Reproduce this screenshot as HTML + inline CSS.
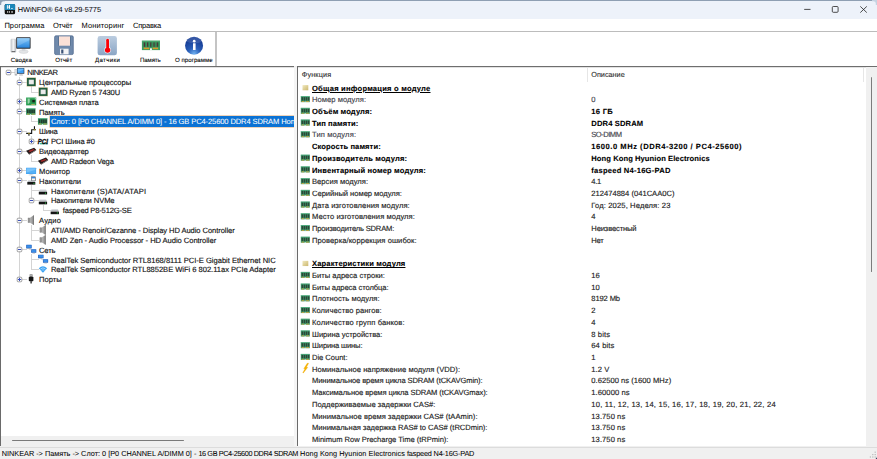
<!DOCTYPE html>
<html lang="ru"><head><meta charset="utf-8"><title>HWiNFO 64</title>
<style>
html,body{margin:0;padding:0}
body{width:877px;height:459px;overflow:hidden;position:relative;background:#f0f0f0;font-family:"Liberation Sans", sans-serif;color:#000}
div,span,svg{position:absolute;box-sizing:border-box}
.t{white-space:nowrap;line-height:1;text-rendering:geometricPrecision;-webkit-text-stroke:.14px}
#title{left:0;top:0;width:877px;height:18.7px;background:#edf2fa}
#menu{left:0;top:18.7px;width:877px;height:12px;background:#fff}
#tb{left:0;top:31.6px;width:877px;height:34.5px;background:#fff}
#tree{left:1px;top:67px;width:293px;height:369px;background:#fff;overflow:hidden}
#list{left:298px;top:67px;width:568px;height:378.6px;background:#fff;overflow:hidden}
.tr{font-size:7.60px;color:#111}
.lr{font-size:7.60px;color:#222}
.b{font-weight:bold;color:#000;-webkit-text-stroke:.1px}
.u{text-decoration:underline;text-decoration-thickness:.55px;text-underline-offset:.9px}
.g{color:#42424a}
.tl{font-size:6.1px;color:#000;-webkit-text-stroke:.08px}

</style></head><body>
<svg width="0" height="0" style="left:0;top:0"><defs><linearGradient id="ag" x1="0" y1="0" x2="1" y2="0"><stop offset="0" stop-color="#cfcfcf"/><stop offset="1" stop-color="#8c8c8c"/></linearGradient><linearGradient id="fg" x1="0" y1="0" x2="1" y2="1"><stop offset="0" stop-color="#f1e9bf"/><stop offset="1" stop-color="#cbb76e"/></linearGradient></defs></svg>
<div id="title">
<div style="left:0;top:0;width:877px;height:1.2px;background:#8e9fb3"></div>
<svg style="left:0;top:0" width="5" height="5" viewBox="0 0 5 5"><path d="M0 0H5V1.2H3.6A2.4 2.4 0 0 0 1.2 3.6V5H0Z" fill="#8e9fb3"/></svg>
<svg style="left:872px;top:0" width="5" height="5" viewBox="0 0 5 5"><path d="M5 0H0V1.2H1.4A2.4 2.4 0 0 1 3.8 3.6V5H5Z" fill="#c5d3e2"/></svg>
<svg style="left:4px;top:4px" width="12" height="11" viewBox="-.7 -.1 12 11"><rect x="0" y="0" width="10.4" height="10.2" rx="1.5" fill="#101010"/><path d="M1.5 0H8.9A1.5 1.5 0 0 1 10.4 1.5V5.9H0V1.5A1.5 1.5 0 0 1 1.5 0Z" fill="#1b86b9"/><rect x="2.2" y="1" width=".9" height="3.7" fill="#fff"/><rect x="4.1" y="1" width="1.2" height="3.7" fill="#fff"/><rect x="3" y="2.6" width="1.2" height=".8" fill="#fff"/><rect x="6.5" y="3.9" width="1.5" height=".8" fill="#fff"/><rect x="2.4" y="7.1" width=".8" height="1.5" fill="#fff"/><rect x="4.1" y="7.1" width="1" height="1.5" fill="#fff"/><rect x="6.7" y="7.1" width="1.3" height="1.5" fill="#fff"/></svg>
<span id="ttl" class="t" style="left:17.80px;top:5.80px;letter-spacing:-0.056px;font-size:7.4px;color:#000;-webkit-text-stroke:0">HWiNFO® 64 v8.29-5775</span>
<svg style="left:800px;top:3px" width="72" height="13" viewBox="0 0 72 13"><path d="M4.2 6.4H10.5" stroke="#222" stroke-width=".8" fill="none"/><rect x="32.3" y="3.5" width="5.8" height="5.8" rx="1" fill="none" stroke="#222" stroke-width=".8"/><path d="M60.3 3.4L66.8 9.6M66.8 3.4L60.3 9.6" stroke="#222" stroke-width=".8" fill="none"/></svg>
</div>
<div id="menu">
<span id="m0" class="t" style="left:4.40px;top:3.20px;letter-spacing:0.088px;font-size:7.5px;color:#000;-webkit-text-stroke:0">Программа</span>
<span id="m1" class="t" style="left:53.00px;top:3.20px;letter-spacing:-0.249px;font-size:7.5px;color:#000;-webkit-text-stroke:0">Отчёт</span>
<span id="m2" class="t" style="left:81.60px;top:3.20px;letter-spacing:0.110px;font-size:7.5px;color:#000;-webkit-text-stroke:0">Мониторинг</span>
<span id="m3" class="t" style="left:133.00px;top:3.20px;letter-spacing:-0.220px;font-size:7.5px;color:#000;-webkit-text-stroke:0">Справка</span>
</div>
<div style="left:0;top:30.6px;width:877px;height:1px;background:#bcbcbc"></div>
<div style="left:0;top:31.6px;width:877px;height:1px;background:#ececec"></div>
<div id="tb">
<div style="left:215.2px;top:0;width:1.5px;height:34.5px;background:#c4c4c4"></div>
</div>
<span id="tb0" class="t tl" style="left:10.80px;top:57.60px;letter-spacing:0.104px">Сводка</span>
<span id="tb1" class="t tl" style="left:55.30px;top:57.60px;letter-spacing:0.027px">Отчёт</span>
<span id="tb2" class="t tl" style="left:95.00px;top:57.60px;letter-spacing:0.345px">Датчики</span>
<span id="tb3" class="t tl" style="left:140.00px;top:57.60px;letter-spacing:-0.107px">Память</span>
<span id="tb4" class="t tl" style="left:175.00px;top:57.60px;letter-spacing:0.032px">О программе</span>
<svg style="left:0;top:32px" width="220" height="26" viewBox="0 32 220 26">
<defs>
<linearGradient id="scr" x1="0" y1="0" x2="0" y2="1"><stop offset="0" stop-color="#7cc4fa"/><stop offset="1" stop-color="#2a86dc"/></linearGradient>
<linearGradient id="twr" x1="0" y1="0" x2="1" y2="0"><stop offset="0" stop-color="#c8ccd0"/><stop offset=".5" stop-color="#f4f5f6"/><stop offset="1" stop-color="#b8bcc2"/></linearGradient>
<linearGradient id="thm" x1="0" y1="0" x2="0" y2="1"><stop offset="0" stop-color="#bccde0"/><stop offset="1" stop-color="#8aa5c5"/></linearGradient>
<radialGradient id="inf" cx=".5" cy=".95" r=".75"><stop offset="0" stop-color="#6fb0f0"/><stop offset=".45" stop-color="#2a5fb8"/><stop offset="1" stop-color="#173f98"/></radialGradient>
</defs>
<!-- computer -->
<rect x="10.9" y="39.2" width="5" height="13" rx=".6" fill="url(#twr)" stroke="#b4b8be" stroke-width=".4"/>
<rect x="11.6" y="51.2" width="3.6" height=".9" fill="#555"/>
<ellipse cx="23.6" cy="51.6" rx="4.6" ry="1.9" fill="#e2e4e6" stroke="#c4c7cb" stroke-width=".4"/>
<rect x="21.8" y="48.6" width="3.6" height="2.4" fill="#d4d7da"/>
<rect x="16.2" y="37.2" width="14.4" height="11.6" rx=".8" fill="#2b2f36"/>
<rect x="17.1" y="38.1" width="12.6" height="9.6" fill="url(#scr)"/>
<path d="M17.1 38.1H29.7V40L17.1 46.5Z" fill="#fff" opacity=".18"/>
<!-- floppy -->
<rect x="54.6" y="35.8" width="18.7" height="18.8" rx="1.4" fill="#6f89ab" stroke="#4d678c" stroke-width=".7"/>
<rect x="59" y="36.4" width="11" height="9.3" fill="#fbe1d7"/>
<rect x="58.2" y="36.4" width=".8" height="9.3" fill="#56708f"/><rect x="70" y="36.4" width=".8" height="9.3" fill="#56708f"/>
<rect x="60" y="48.7" width="8.6" height="5.6" fill="#f2f3f5"/>
<rect x="61.2" y="49.5" width="2.2" height="4" fill="#3d5478"/>
<!-- thermometer -->
<rect x="97.6" y="36" width="19.3" height="19.3" rx="2.4" fill="url(#thm)"/>
<rect x="105.6" y="38.2" width="4" height="11" rx="2" fill="#e8f0f8"/>
<circle cx="107.6" cy="50.1" r="3.3" fill="#e8f0f8"/>
<rect x="106.2" y="38.8" width="2.8" height="10" rx="1.4" fill="#fb0007"/>
<circle cx="107.6" cy="50.1" r="2.7" fill="#fb0007"/>
<!-- ram -->
<rect x="141.9" y="40.7" width="18.1" height="9.4" fill="#3b9c62"/>
<rect x="141.9" y="40.7" width="18.1" height=".7" fill="#5ab27c"/>
<g fill="#4a3638"><rect x="143.7" y="42.4" width="1.3" height="4.4"/><rect x="146.9" y="42.4" width="1.3" height="4.4"/><rect x="150.15" y="42.4" width="1.3" height="4.4"/><rect x="153.4" y="42.4" width="1.3" height="4.4"/><rect x="156.65" y="42.4" width="1.3" height="4.4"/></g>
<g fill="#2f7a4c" opacity=".7"><rect x="145" y="42.4" width="1" height="4.4"/><rect x="148.2" y="42.4" width="1" height="4.4"/><rect x="151.45" y="42.4" width="1" height="4.4"/><rect x="154.7" y="42.4" width="1" height="4.4"/><rect x="157.95" y="42.4" width="1" height="4.4"/></g>
<rect x="143.7" y="47.6" width="5.6" height="1.6" fill="#d89a2a"/><rect x="152.6" y="47.6" width="5.5" height="1.6" fill="#d89a2a"/>
<rect x="150" y="48.3" width="1.9" height="1.9" fill="#fff"/>
<!-- info -->
<circle cx="194.05" cy="45.7" r="9" fill="url(#inf)"/>
<path d="M186.2 41.5A9 9 0 0 1 202 41.8Q194 45 186.2 41.5Z" fill="#fff" opacity=".13"/>
<circle cx="194.2" cy="41.2" r="1.35" fill="#fff"/>
<rect x="193" y="43.2" width="2.6" height="6.9" rx=".3" fill="#fff"/>
</svg>
<div style="left:0;top:66px;width:294px;height:1px;background:#6e6e6e"></div>
<div style="left:297px;top:66px;width:580px;height:1px;background:#6e6e6e"></div>
<div style="left:0;top:66px;width:1px;height:379.6px;background:#6a6a6a"></div>
<div style="left:297.2px;top:66px;width:1.1px;height:379.6px;background:#6a6a6a;z-index:3"></div>
<div style="left:294px;top:67px;width:3px;height:379px;background:#f5f5f5"></div>
<div style="left:1px;top:67px;width:293px;height:1px;background:#e2e2e2;z-index:2"></div>
<div style="left:298px;top:67px;width:568px;height:1px;background:#e2e2e2;z-index:2"></div>
<div id="tree">
<div style="left:18.00px;top:9.51px;width:1px;height:203.49px;background:#d4d4d4"></div>
<div style="left:30.00px;top:19.38px;width:1px;height:6.62px;background:#d4d4d4"></div>
<div style="left:30.00px;top:48.98px;width:1px;height:6.02px;background:#d4d4d4"></div>
<div style="left:30.00px;top:68.72px;width:1px;height:6.28px;background:#d4d4d4"></div>
<div style="left:30.00px;top:88.45px;width:1px;height:6.55px;background:#d4d4d4"></div>
<div style="left:30.00px;top:118.05px;width:1px;height:15.95px;background:#d4d4d4"></div>
<div style="left:42.00px;top:137.78px;width:1px;height:6.22px;background:#d4d4d4"></div>
<div style="left:30.00px;top:157.52px;width:1px;height:16.48px;background:#d4d4d4"></div>
<div style="left:30.00px;top:187.12px;width:1px;height:15.88px;background:#d4d4d4"></div>
<div style="left:7.00px;top:5.00px;width:7.80px;height:1px;background:#d4d4d4"></div>
<svg style="left:4px;top:2px" width="7" height="7" viewBox="0 0 7 7"><rect x="1.2" y="1.2" width="4.6" height="4.6" rx=".9" fill="#fcfcfe" stroke="#7c7c7c" stroke-width=".7"/><path d="M2 3.5H5" stroke="#3a50bc" stroke-width="1"/></svg>
<svg style="left:13px;top:-1px" width="13" height="13" viewBox="-0.20 -1.38 13 13"><rect x=".7" y="1.9" width="2.1" height="6.2" fill="#dfe2e6" stroke="#a9aeb5" stroke-width=".35"/><rect x="1.1" y="7.1" width="1.3" height=".6" fill="#666"/><ellipse cx="6.9" cy="7.5" rx="2.1" ry=".7" fill="#d4d7db" stroke="#b0b4b9" stroke-width=".3"/><rect x="6" y="6.3" width="1.8" height="1" fill="#c5c9ce"/><rect x="2.8" y=".5" width="7.3" height="5.9" rx=".4" fill="#2c3440"/><rect x="3.4" y="1.1" width="6.1" height="4.7" fill="#3d9df2"/><path d="M3.4 1.1H9.5V2.2L3.4 5Z" fill="#8fd0ff" opacity=".55"/></svg>
<span id="t0" class="t tr" style="left:26.20px;top:2.13px;letter-spacing:-0.511px">NINKEAR</span>
<div style="left:18.00px;top:15.00px;width:7.80px;height:1px;background:#d4d4d4"></div>
<svg style="left:15px;top:12px" width="7" height="7" viewBox="0 0 7 7"><rect x="1.2" y="1.2" width="4.6" height="4.6" rx=".9" fill="#fcfcfe" stroke="#7c7c7c" stroke-width=".7"/><path d="M2 3.5H5" stroke="#3a50bc" stroke-width="1"/></svg>
<svg style="left:25px;top:9px" width="13" height="13" viewBox="-0.05 -1.25 13 13"><rect x=".55" y=".25" width="9.4" height="9" fill="#cdbb8e"/><rect x="1" y=".7" width="8.5" height="8.1" fill="#1e5b3c"/><rect x="2.7" y="2.4" width="5.1" height="4.7" fill="#dcdcdc"/><rect x="3.3" y="3" width="3.9" height="3.5" fill="#ececec"/></svg>
<span id="t1" class="t tr" style="left:38.05px;top:12.00px;letter-spacing:-0.039px">Центральные процессоры</span>
<div style="left:30.00px;top:25.00px;width:7.80px;height:1px;background:#d4d4d4"></div>
<svg style="left:36px;top:19px" width="13" height="13" viewBox="-0.90 -1.11 13 13"><rect x=".55" y=".25" width="9.4" height="9" fill="#cdbb8e"/><rect x="1" y=".7" width="8.5" height="8.1" fill="#1e5b3c"/><rect x="2.7" y="2.4" width="5.1" height="4.7" fill="#dcdcdc"/><rect x="3.3" y="3" width="3.9" height="3.5" fill="#ececec"/></svg>
<span id="t2" class="t tr" style="left:49.90px;top:21.86px;letter-spacing:-0.128px">AMD Ryzen 5 7430U</span>
<div style="left:18.00px;top:34.00px;width:7.80px;height:1px;background:#d4d4d4"></div>
<svg style="left:15px;top:31px" width="7" height="7" viewBox="0 0 7 7"><rect x="1.2" y="1.2" width="4.6" height="4.6" rx=".9" fill="#fcfcfe" stroke="#7c7c7c" stroke-width=".7"/><path d="M2 3.5H5M3.5 2V5" stroke="#3a50bc" stroke-width="1"/></svg>
<svg style="left:25px;top:28px" width="13" height="13" viewBox="-0.05 -1.98 13 13"><rect x=".05" y=".7" width="10.1" height="7.7" fill="#2a9d52"/><rect x=".05" y=".7" width="10.1" height=".6" fill="#55b878"/><rect x="1.7" y="1.6" width=".9" height="5" fill="#d8f0dc"/><rect x="3.3" y="1.6" width=".8" height="4.2" fill="#9fdcb0"/><rect x="4.6" y="2" width=".7" height="3.4" fill="#176b36"/><rect x="6.2" y="2.9" width="2.6" height="2.5" fill="#14261a"/><rect x="5.2" y="7" width="3.6" height=".8" fill="#c8b060"/><rect x="8.8" y="1.3" width=".9" height="1" fill="#e8f4ea"/></svg>
<span id="t3" class="t tr" style="left:38.05px;top:31.73px;letter-spacing:-0.105px">Системная плата</span>
<div style="left:18.00px;top:44.00px;width:7.80px;height:1px;background:#d4d4d4"></div>
<svg style="left:15px;top:41px" width="7" height="7" viewBox="0 0 7 7"><rect x="1.2" y="1.2" width="4.6" height="4.6" rx=".9" fill="#fcfcfe" stroke="#7c7c7c" stroke-width=".7"/><path d="M2 3.5H5" stroke="#3a50bc" stroke-width="1"/></svg>
<svg style="left:25px;top:38px" width="13" height="13" viewBox="-0.05 -1.85 13 13"><rect x=".05" y="1.65" width="9.4" height="6.3" fill="#2f9362"/><rect x=".05" y="1.65" width="9.4" height=".6" fill="#4fae7e"/><g fill="#22382c"><rect x=".9" y="2.7" width="1.6" height="3.6"/><rect x="3.1" y="2.7" width="1.6" height="3.6"/><rect x="5.2" y="2.7" width="1.6" height="3.6"/><rect x="7.3" y="2.7" width="1.6" height="3.6"/></g><rect x=".9" y="6.8" width="2.6" height=".9" fill="#c9a646"/><rect x="5.6" y="6.8" width="3.2" height=".9" fill="#c9a646"/><rect x="4.1" y="7.2" width=".9" height=".8" fill="#fff"/></svg>
<span id="t4" class="t tr" style="left:38.05px;top:41.60px;letter-spacing:-0.181px">Память</span>
<div style="left:30.00px;top:54.00px;width:7.80px;height:1px;background:#d4d4d4"></div>
<svg style="left:36px;top:48px" width="13" height="13" viewBox="-0.90 -1.72 13 13"><rect x=".05" y="1.65" width="9.4" height="6.3" fill="#2f9362"/><rect x=".05" y="1.65" width="9.4" height=".6" fill="#4fae7e"/><g fill="#22382c"><rect x=".9" y="2.7" width="1.6" height="3.6"/><rect x="3.1" y="2.7" width="1.6" height="3.6"/><rect x="5.2" y="2.7" width="1.6" height="3.6"/><rect x="7.3" y="2.7" width="1.6" height="3.6"/></g><rect x=".9" y="6.8" width="2.6" height=".9" fill="#c9a646"/><rect x="5.6" y="6.8" width="3.2" height=".9" fill="#c9a646"/><rect x="4.1" y="7.2" width=".9" height=".8" fill="#fff"/></svg>
<div style="left:48.75px;top:49.32px;width:300px;height:10.27px;background:#0b72d4;box-shadow:0 0 0 .6px #e3b68e"></div>
<span id="t5" class="t tr" style="left:49.90px;top:51.47px;letter-spacing:-0.137px;color:#fff;-webkit-text-stroke:.05px">Слот: 0 [P0 CHANNEL A/DIMM 0] - 16 GB PC4-25600 DDR4 SDRAM Hong Kong Hyunion Electronics faspeed N4-16G-PAD</span>
<div style="left:18.00px;top:64.00px;width:7.80px;height:1px;background:#d4d4d4"></div>
<svg style="left:15px;top:61px" width="7" height="7" viewBox="0 0 7 7"><rect x="1.2" y="1.2" width="4.6" height="4.6" rx=".9" fill="#fcfcfe" stroke="#7c7c7c" stroke-width=".7"/><path d="M2 3.5H5" stroke="#3a50bc" stroke-width="1"/></svg>
<svg style="left:25px;top:58px" width="13" height="13" viewBox="-0.05 -1.58 13 13"><path d="M.1 6.8H5.6V3.2H9.9M2.9 6.8V9.2M8.4 -.4V3.2" fill="none" stroke="#161616" stroke-width="1.1"/><rect x="2.3" y="6.2" width="1.2" height="1.2" fill="#b8a818"/><rect x="7.8" y="2.6" width="1.2" height="1.2" fill="#b8a818"/></svg>
<span id="t6" class="t tr" style="left:38.05px;top:61.33px;letter-spacing:-0.325px">Шина</span>
<div style="left:30.00px;top:74.00px;width:7.80px;height:1px;background:#d4d4d4"></div>
<svg style="left:27px;top:71px" width="7" height="7" viewBox="0 0 7 7"><rect x="1.2" y="1.2" width="4.6" height="4.6" rx=".9" fill="#fcfcfe" stroke="#7c7c7c" stroke-width=".7"/><path d="M2 3.5H5M3.5 2V5" stroke="#3a50bc" stroke-width="1"/></svg>
<svg style="left:36px;top:68px" width="13" height="13" viewBox="-0.90 -1.45 13 13"><rect x="2" y="6.4" width="8" height="1.5" fill="#3fb3a2"/><text x="-.1" y="7.8" font-family="Liberation Sans, sans-serif" font-weight="bold" font-style="italic" font-size="6.4" fill="#0c0c0c" stroke="#0c0c0c" stroke-width=".3" textLength="10" lengthAdjust="spacingAndGlyphs">PCI</text></svg>
<span id="t7" class="t tr" style="left:49.90px;top:71.20px;letter-spacing:-0.085px">PCI Шина #0</span>
<div style="left:18.00px;top:84.00px;width:7.80px;height:1px;background:#d4d4d4"></div>
<svg style="left:15px;top:81px" width="7" height="7" viewBox="0 0 7 7"><rect x="1.2" y="1.2" width="4.6" height="4.6" rx=".9" fill="#fcfcfe" stroke="#7c7c7c" stroke-width=".7"/><path d="M2 3.5H5" stroke="#3a50bc" stroke-width="1"/></svg>
<svg style="left:25px;top:78px" width="13" height="13" viewBox="-0.05 -1.32 13 13"><path d="M.05 4.5L8.05 1.4L10.15 3.5L2.85 8Z" fill="#241c1c"/><path d="M2.6 4.6L7.4 2.7L8.3 3.7L3.6 5.9Z" fill="#c22a2a"/><path d="M3.4 4.7L4.2 5.6M5 4.1L5.8 5M6.5 3.5L7.3 4.4" stroke="#241c1c" stroke-width=".5"/><path d="M2.85 8L10.15 3.5V4.2L3.2 8.5Z" fill="#5a4a4a"/></svg>
<span id="t8" class="t tr" style="left:38.05px;top:81.07px;letter-spacing:-0.115px">Видеоадаптер</span>
<div style="left:30.00px;top:94.00px;width:7.80px;height:1px;background:#d4d4d4"></div>
<svg style="left:36px;top:88px" width="13" height="13" viewBox="-0.90 -1.18 13 13"><path d="M.05 4.5L8.05 1.4L10.15 3.5L2.85 8Z" fill="#241c1c"/><path d="M2.6 4.6L7.4 2.7L8.3 3.7L3.6 5.9Z" fill="#c22a2a"/><path d="M3.4 4.7L4.2 5.6M5 4.1L5.8 5M6.5 3.5L7.3 4.4" stroke="#241c1c" stroke-width=".5"/><path d="M2.85 8L10.15 3.5V4.2L3.2 8.5Z" fill="#5a4a4a"/></svg>
<span id="t9" class="t tr" style="left:49.90px;top:90.93px;letter-spacing:-0.144px">AMD Radeon Vega</span>
<div style="left:18.00px;top:103.00px;width:7.80px;height:1px;background:#d4d4d4"></div>
<svg style="left:15px;top:100px" width="7" height="7" viewBox="0 0 7 7"><rect x="1.2" y="1.2" width="4.6" height="4.6" rx=".9" fill="#fcfcfe" stroke="#7c7c7c" stroke-width=".7"/><path d="M2 3.5H5M3.5 2V5" stroke="#3a50bc" stroke-width="1"/></svg>
<svg style="left:25px;top:98px" width="13" height="13" viewBox="-0.05 -1.05 13 13"><rect x="-.15" y="1.75" width="10.2" height="6.1" rx=".4" fill="#3f9fee"/><rect x=".35" y="2.2" width="9.2" height="5.2" fill="#55b0f6"/><path d="M.35 2.2H9.55V3.6L.35 6.4Z" fill="#9ad6ff" opacity=".5"/><rect x="3.6" y="7.9" width="2.8" height=".7" fill="#b8bec5"/><rect x="2.6" y="8.6" width="4.8" height=".7" fill="#d0d4d9"/></svg>
<span id="t10" class="t tr" style="left:38.05px;top:100.80px;letter-spacing:0.021px">Монитор</span>
<div style="left:18.00px;top:113.00px;width:7.80px;height:1px;background:#d4d4d4"></div>
<svg style="left:15px;top:110px" width="7" height="7" viewBox="0 0 7 7"><rect x="1.2" y="1.2" width="4.6" height="4.6" rx=".9" fill="#fcfcfe" stroke="#7c7c7c" stroke-width=".7"/><path d="M2 3.5H5" stroke="#3a50bc" stroke-width="1"/></svg>
<svg style="left:25px;top:107px" width="13" height="13" viewBox="-0.05 -1.92 13 13"><rect x="5.2" y=".9" width="4.1" height="4" fill="#f4f6f8" stroke="#2a3038" stroke-width=".5"/><rect x="5.45" y="1.15" width="3.6" height="1.3" fill="#2f7fd8"/><path d="M2.2 4.6H8.3L9.25 6.1H1.25Z" fill="#b9bdc2"/><rect x="1.25" y="6.1" width="8" height="2.6" fill="#141414"/><rect x="7.4" y="6.9" width="1" height="1" fill="#2fd24a"/></svg>
<span id="t11" class="t tr" style="left:38.05px;top:110.67px;letter-spacing:0.035px">Накопители</span>
<div style="left:30.00px;top:123.00px;width:7.80px;height:1px;background:#d4d4d4"></div>
<svg style="left:36px;top:117px" width="13" height="13" viewBox="-0.90 -1.78 13 13"><path d="M1.9 4H8.2L9.2 6.1H.9Z" fill="#b9bdc2"/><path d="M1.9 4H8.2L8.5 4.6H1.6Z" fill="#d9dcdf"/><rect x=".9" y="6.1" width="8.3" height="2.6" fill="#141414"/><rect x="7.1" y="6.9" width="1" height="1" fill="#2fd24a"/></svg>
<span id="t12" class="t tr" style="left:49.90px;top:120.53px;letter-spacing:0.212px">Накопители (S)ATA/ATAPI</span>
<div style="left:30.00px;top:133.00px;width:7.80px;height:1px;background:#d4d4d4"></div>
<svg style="left:27px;top:130px" width="7" height="7" viewBox="0 0 7 7"><rect x="1.2" y="1.2" width="4.6" height="4.6" rx=".9" fill="#fcfcfe" stroke="#7c7c7c" stroke-width=".7"/><path d="M2 3.5H5" stroke="#3a50bc" stroke-width="1"/></svg>
<svg style="left:36px;top:127px" width="13" height="13" viewBox="-0.90 -1.65 13 13"><path d="M1.9 4H8.2L9.2 6.1H.9Z" fill="#b9bdc2"/><path d="M1.9 4H8.2L8.5 4.6H1.6Z" fill="#d9dcdf"/><rect x=".9" y="6.1" width="8.3" height="2.6" fill="#141414"/><rect x="7.1" y="6.9" width="1" height="1" fill="#2fd24a"/></svg>
<span id="t13" class="t tr" style="left:49.90px;top:130.40px;letter-spacing:-0.088px">Накопители NVMe</span>
<div style="left:42.00px;top:143.00px;width:7.80px;height:1px;background:#d4d4d4"></div>
<svg style="left:48px;top:137px" width="13" height="13" viewBox="-0.75 -1.52 13 13"><path d="M1.9 4H8.2L9.2 6.1H.9Z" fill="#b9bdc2"/><path d="M1.9 4H8.2L8.5 4.6H1.6Z" fill="#d9dcdf"/><rect x=".9" y="6.1" width="8.3" height="2.6" fill="#141414"/><rect x="7.1" y="6.9" width="1" height="1" fill="#2fd24a"/></svg>
<span id="t14" class="t tr" style="left:61.75px;top:140.27px;letter-spacing:-0.190px">faspeed P8-512G-SE</span>
<div style="left:18.00px;top:153.00px;width:7.80px;height:1px;background:#d4d4d4"></div>
<svg style="left:15px;top:150px" width="7" height="7" viewBox="0 0 7 7"><rect x="1.2" y="1.2" width="4.6" height="4.6" rx=".9" fill="#fcfcfe" stroke="#7c7c7c" stroke-width=".7"/><path d="M2 3.5H5" stroke="#3a50bc" stroke-width="1"/></svg>
<svg style="left:25px;top:147px" width="13" height="13" viewBox="-0.05 -1.39 13 13"><path d="M1.95 2.5H3.6L7.75 -.2V9.7L3.6 7.1H1.95Z" fill="url(#ag)"/><path d="M7.4 0V9.5" stroke="#5a5a5a" stroke-width=".6"/><path d="M1.95 2.5H3.6V7.1H1.95Z" fill="#9a9a9a" stroke="#6a6a6a" stroke-width=".3"/></svg>
<span id="t15" class="t tr" style="left:38.05px;top:150.14px;letter-spacing:0.107px">Аудио</span>
<div style="left:30.00px;top:163.00px;width:7.80px;height:1px;background:#d4d4d4"></div>
<svg style="left:36px;top:157px" width="13" height="13" viewBox="-0.90 -1.25 13 13"><path d="M1.95 2.5H3.6L7.75 -.2V9.7L3.6 7.1H1.95Z" fill="url(#ag)"/><path d="M7.4 0V9.5" stroke="#5a5a5a" stroke-width=".6"/><path d="M1.95 2.5H3.6V7.1H1.95Z" fill="#9a9a9a" stroke="#6a6a6a" stroke-width=".3"/></svg>
<span id="t16" class="t tr" style="left:49.90px;top:160.00px;letter-spacing:-0.084px">ATI/AMD Renoir/Cezanne - Display HD Audio Controller</span>
<div style="left:30.00px;top:173.00px;width:7.80px;height:1px;background:#d4d4d4"></div>
<svg style="left:36px;top:167px" width="13" height="13" viewBox="-0.90 -1.12 13 13"><path d="M1.95 2.5H3.6L7.75 -.2V9.7L3.6 7.1H1.95Z" fill="url(#ag)"/><path d="M7.4 0V9.5" stroke="#5a5a5a" stroke-width=".6"/><path d="M1.95 2.5H3.6V7.1H1.95Z" fill="#9a9a9a" stroke="#6a6a6a" stroke-width=".3"/></svg>
<span id="t17" class="t tr" style="left:49.90px;top:169.87px;letter-spacing:-0.058px">AMD Zen - Audio Processor - HD Audio Controller</span>
<div style="left:18.00px;top:182.00px;width:7.80px;height:1px;background:#d4d4d4"></div>
<svg style="left:15px;top:179px" width="7" height="7" viewBox="0 0 7 7"><rect x="1.2" y="1.2" width="4.6" height="4.6" rx=".9" fill="#fcfcfe" stroke="#7c7c7c" stroke-width=".7"/><path d="M2 3.5H5" stroke="#3a50bc" stroke-width="1"/></svg>
<svg style="left:25px;top:176px" width="13" height="13" viewBox="-0.05 -1.99 13 13"><rect x=".15" y="-.2" width="5.5" height="3.6" rx=".3" fill="#1f5fbe"/><rect x=".7" y=".3" width="4.4" height="2.5" fill="#3a8ee8"/><rect x="1.6" y="3.4" width="2.6" height=".7" fill="#a8aeb6"/><rect x="5.05" y="4.3" width="5.2" height="3.5" rx=".3" fill="#1f5fbe"/><rect x="5.6" y="4.8" width="4.1" height="2.4" fill="#3a8ee8"/><rect x="6.4" y="7.8" width="2.6" height=".7" fill="#a8aeb6"/><path d="M3 3.9L5.6 5.4" stroke="#9aa0a8" stroke-width=".5"/></svg>
<span id="t18" class="t tr" style="left:38.05px;top:179.74px;letter-spacing:-0.180px">Сеть</span>
<div style="left:30.00px;top:192.00px;width:7.80px;height:1px;background:#d4d4d4"></div>
<svg style="left:36px;top:186px" width="13" height="13" viewBox="-0.90 -1.85 13 13"><rect x=".15" y="-.2" width="5.5" height="3.6" rx=".3" fill="#1f5fbe"/><rect x=".7" y=".3" width="4.4" height="2.5" fill="#3a8ee8"/><rect x="1.6" y="3.4" width="2.6" height=".7" fill="#a8aeb6"/><rect x="5.05" y="4.3" width="5.2" height="3.5" rx=".3" fill="#1f5fbe"/><rect x="5.6" y="4.8" width="4.1" height="2.4" fill="#3a8ee8"/><rect x="6.4" y="7.8" width="2.6" height=".7" fill="#a8aeb6"/><path d="M3 3.9L5.6 5.4" stroke="#9aa0a8" stroke-width=".5"/></svg>
<span id="t19" class="t tr" style="left:49.90px;top:189.60px;letter-spacing:-0.017px">RealTek Semiconductor RTL8168/8111 PCI-E Gigabit Ethernet NIC</span>
<div style="left:30.00px;top:202.00px;width:7.80px;height:1px;background:#d4d4d4"></div>
<svg style="left:36px;top:196px" width="13" height="13" viewBox="-0.90 -1.72 13 13"><path d="M.9 3.5Q5.05 -.6 9.2 3.5L5.6 7.6Q5.05 8.2 4.5 7.6Z" fill="#3aa2f2"/><path d="M2.5 4.3Q5.05 2 7.6 4.3" fill="none" stroke="#c4e4ff" stroke-width=".7"/><path d="M3.6 5.6Q5.05 4.4 6.5 5.6" fill="none" stroke="#c4e4ff" stroke-width=".6"/></svg>
<span id="t20" class="t tr" style="left:49.90px;top:199.47px;letter-spacing:-0.041px">RealTek Semiconductor RTL8852BE WiFi 6 802.11ax PCIe Adapter</span>
<div style="left:18.00px;top:212.00px;width:7.80px;height:1px;background:#d4d4d4"></div>
<svg style="left:15px;top:209px" width="7" height="7" viewBox="0 0 7 7"><rect x="1.2" y="1.2" width="4.6" height="4.6" rx=".9" fill="#fcfcfe" stroke="#7c7c7c" stroke-width=".7"/><path d="M2 3.5H5M3.5 2V5" stroke="#3a50bc" stroke-width="1"/></svg>
<svg style="left:25px;top:206px" width="13" height="13" viewBox="-0.05 -1.59 13 13"><rect x="3.6" y="-.3" width="2.9" height="2.6" fill="#7a7a7a"/><rect x="4.2" y=".3" width=".6" height="1" fill="#ddd"/><rect x="5.3" y=".3" width=".6" height="1" fill="#ddd"/><rect x="2.75" y="2.1" width="4.6" height="4.6" rx=".7" fill="#161616"/><rect x="4.4" y="6.5" width="1.3" height="2.4" fill="#222"/></svg>
<span id="t21" class="t tr" style="left:38.05px;top:209.34px;letter-spacing:-0.034px">Порты</span>
</div>
<div style="left:1px;top:436px;width:293px;height:9.6px;background:#f0f0f0"></div>
<div style="left:11.8px;top:439.9px;width:172px;height:1.4px;border-radius:.7px;background:#7a7a7a"></div>
<div id="list">
<span id="h0" class="t" style="left:3.80px;top:3.50px;letter-spacing:0.113px;font-size:7.3px;color:#2a2a2a;-webkit-text-stroke:.08px">Функция</span>
<span id="h1" class="t" style="left:293.30px;top:3.50px;letter-spacing:-0.025px;font-size:7.3px;color:#2a2a2a;-webkit-text-stroke:.08px">Описание</span>
<div style="left:288.5px;top:0;width:1px;height:15.2px;background:#e6e6e6"></div>
<div style="left:565px;top:0;width:1px;height:15.2px;background:#e6e6e6"></div>
<svg style="left:4px;top:17px" width="13" height="13" viewBox="-0.50 -1.10 13 13"><rect x="0" y="0" width="5.8" height="5.2" fill="url(#fg)"/></svg>
<span id="l0" class="t lr b u" style="left:14.00px;top:17.55px;letter-spacing:0.210px">Общая информация о модуле</span>
<svg style="left:2px;top:28px" width="13" height="13" viewBox="-0.80 -1.17 13 13"><rect x="0" y="0" width="9" height="6" fill="#3a9a6a"/><rect x="0" y="0" width="9" height=".6" fill="#5ab488"/><g fill="#2d4638"><rect x=".8" y="1" width="1.5" height="3.4"/><rect x="2.9" y="1" width="1.5" height="3.4"/><rect x="5" y="1" width="1.5" height="3.4"/><rect x="7.1" y="1" width="1.5" height="3.4"/></g><rect x=".8" y="4.9" width="2.6" height=".9" fill="#c9a646"/><rect x="5.3" y="4.9" width="3" height=".9" fill="#c9a646"/><rect x="3.9" y="5.3" width=".9" height=".8" fill="#fff"/></svg>
<span id="l1" class="t lr g" style="left:14.00px;top:29.27px;letter-spacing:0.043px">Номер модуля:</span>
<span id="v1" class="t lr g" style="left:293.30px;top:29.27px">0</span>
<svg style="left:2px;top:39px" width="13" height="13" viewBox="-0.80 -1.88 13 13"><rect x="0" y="0" width="9" height="6" fill="#3a9a6a"/><rect x="0" y="0" width="9" height=".6" fill="#5ab488"/><g fill="#2d4638"><rect x=".8" y="1" width="1.5" height="3.4"/><rect x="2.9" y="1" width="1.5" height="3.4"/><rect x="5" y="1" width="1.5" height="3.4"/><rect x="7.1" y="1" width="1.5" height="3.4"/></g><rect x=".8" y="4.9" width="2.6" height=".9" fill="#c9a646"/><rect x="5.3" y="4.9" width="3" height=".9" fill="#c9a646"/><rect x="3.9" y="5.3" width=".9" height=".8" fill="#fff"/></svg>
<span id="l2" class="t lr b" style="left:14.00px;top:40.98px;letter-spacing:0.103px">Объём модуля:</span>
<span id="v2" class="t lr b" style="left:293.30px;top:40.98px;letter-spacing:0.293px">16 ГБ</span>
<svg style="left:2px;top:51px" width="13" height="13" viewBox="-0.80 -1.60 13 13"><rect x="0" y="0" width="9" height="6" fill="#3a9a6a"/><rect x="0" y="0" width="9" height=".6" fill="#5ab488"/><g fill="#2d4638"><rect x=".8" y="1" width="1.5" height="3.4"/><rect x="2.9" y="1" width="1.5" height="3.4"/><rect x="5" y="1" width="1.5" height="3.4"/><rect x="7.1" y="1" width="1.5" height="3.4"/></g><rect x=".8" y="4.9" width="2.6" height=".9" fill="#c9a646"/><rect x="5.3" y="4.9" width="3" height=".9" fill="#c9a646"/><rect x="3.9" y="5.3" width=".9" height=".8" fill="#fff"/></svg>
<span id="l3" class="t lr b" style="left:14.00px;top:52.70px;letter-spacing:0.090px">Тип памяти:</span>
<span id="v3" class="t lr b" style="left:293.30px;top:52.70px;letter-spacing:0.129px">DDR4 SDRAM</span>
<svg style="left:2px;top:63px" width="13" height="13" viewBox="-0.80 -1.32 13 13"><rect x="0" y="0" width="9" height="6" fill="#3a9a6a"/><rect x="0" y="0" width="9" height=".6" fill="#5ab488"/><g fill="#2d4638"><rect x=".8" y="1" width="1.5" height="3.4"/><rect x="2.9" y="1" width="1.5" height="3.4"/><rect x="5" y="1" width="1.5" height="3.4"/><rect x="7.1" y="1" width="1.5" height="3.4"/></g><rect x=".8" y="4.9" width="2.6" height=".9" fill="#c9a646"/><rect x="5.3" y="4.9" width="3" height=".9" fill="#c9a646"/><rect x="3.9" y="5.3" width=".9" height=".8" fill="#fff"/></svg>
<span id="l4" class="t lr g" style="left:14.00px;top:64.42px;letter-spacing:0.123px">Тип модуля:</span>
<span id="v4" class="t lr g" style="left:293.30px;top:64.42px;letter-spacing:-0.508px">SO-DIMM</span>
<span id="l5" class="t lr b" style="left:14.00px;top:76.13px;letter-spacing:0.080px">Скорость памяти:</span>
<span id="v5" class="t lr b" style="left:293.30px;top:76.13px;letter-spacing:0.522px">1600.0 MHz (DDR4-3200 / PC4-25600)</span>
<svg style="left:2px;top:86px" width="13" height="13" viewBox="-0.80 -1.75 13 13"><rect x="0" y="0" width="9" height="6" fill="#3a9a6a"/><rect x="0" y="0" width="9" height=".6" fill="#5ab488"/><g fill="#2d4638"><rect x=".8" y="1" width="1.5" height="3.4"/><rect x="2.9" y="1" width="1.5" height="3.4"/><rect x="5" y="1" width="1.5" height="3.4"/><rect x="7.1" y="1" width="1.5" height="3.4"/></g><rect x=".8" y="4.9" width="2.6" height=".9" fill="#c9a646"/><rect x="5.3" y="4.9" width="3" height=".9" fill="#c9a646"/><rect x="3.9" y="5.3" width=".9" height=".8" fill="#fff"/></svg>
<span id="l6" class="t lr b" style="left:14.00px;top:87.85px;letter-spacing:0.140px">Производитель модуля:</span>
<span id="v6" class="t lr b" style="left:293.30px;top:87.85px;letter-spacing:0.070px">Hong Kong Hyunion Electronics</span>
<svg style="left:2px;top:98px" width="13" height="13" viewBox="-0.80 -1.47 13 13"><rect x="0" y="0" width="9" height="6" fill="#3a9a6a"/><rect x="0" y="0" width="9" height=".6" fill="#5ab488"/><g fill="#2d4638"><rect x=".8" y="1" width="1.5" height="3.4"/><rect x="2.9" y="1" width="1.5" height="3.4"/><rect x="5" y="1" width="1.5" height="3.4"/><rect x="7.1" y="1" width="1.5" height="3.4"/></g><rect x=".8" y="4.9" width="2.6" height=".9" fill="#c9a646"/><rect x="5.3" y="4.9" width="3" height=".9" fill="#c9a646"/><rect x="3.9" y="5.3" width=".9" height=".8" fill="#fff"/></svg>
<span id="l7" class="t lr b" style="left:14.00px;top:99.57px;letter-spacing:0.139px">Инвентарный номер модуля:</span>
<span id="v7" class="t lr b" style="left:293.30px;top:99.57px;letter-spacing:0.217px">faspeed N4-16G-PAD</span>
<svg style="left:2px;top:110px" width="13" height="13" viewBox="-0.80 -1.19 13 13"><rect x="0" y="0" width="9" height="6" fill="#3a9a6a"/><rect x="0" y="0" width="9" height=".6" fill="#5ab488"/><g fill="#2d4638"><rect x=".8" y="1" width="1.5" height="3.4"/><rect x="2.9" y="1" width="1.5" height="3.4"/><rect x="5" y="1" width="1.5" height="3.4"/><rect x="7.1" y="1" width="1.5" height="3.4"/></g><rect x=".8" y="4.9" width="2.6" height=".9" fill="#c9a646"/><rect x="5.3" y="4.9" width="3" height=".9" fill="#c9a646"/><rect x="3.9" y="5.3" width=".9" height=".8" fill="#fff"/></svg>
<span id="l8" class="t lr" style="left:14.00px;top:111.29px;letter-spacing:0.018px">Версия модуля:</span>
<span id="v8" class="t lr" style="left:293.30px;top:111.29px;letter-spacing:-0.281px">4.1</span>
<svg style="left:2px;top:121px" width="13" height="13" viewBox="-0.80 -1.90 13 13"><rect x="0" y="0" width="9" height="6" fill="#3a9a6a"/><rect x="0" y="0" width="9" height=".6" fill="#5ab488"/><g fill="#2d4638"><rect x=".8" y="1" width="1.5" height="3.4"/><rect x="2.9" y="1" width="1.5" height="3.4"/><rect x="5" y="1" width="1.5" height="3.4"/><rect x="7.1" y="1" width="1.5" height="3.4"/></g><rect x=".8" y="4.9" width="2.6" height=".9" fill="#c9a646"/><rect x="5.3" y="4.9" width="3" height=".9" fill="#c9a646"/><rect x="3.9" y="5.3" width=".9" height=".8" fill="#fff"/></svg>
<span id="l9" class="t lr" style="left:14.00px;top:123.00px;letter-spacing:-0.034px">Серийный номер модуля:</span>
<span id="v9" class="t lr" style="left:293.30px;top:123.00px;letter-spacing:0.001px">212474884 (041CAA0C)</span>
<svg style="left:2px;top:133px" width="13" height="13" viewBox="-0.80 -1.62 13 13"><rect x="0" y="0" width="9" height="6" fill="#3a9a6a"/><rect x="0" y="0" width="9" height=".6" fill="#5ab488"/><g fill="#2d4638"><rect x=".8" y="1" width="1.5" height="3.4"/><rect x="2.9" y="1" width="1.5" height="3.4"/><rect x="5" y="1" width="1.5" height="3.4"/><rect x="7.1" y="1" width="1.5" height="3.4"/></g><rect x=".8" y="4.9" width="2.6" height=".9" fill="#c9a646"/><rect x="5.3" y="4.9" width="3" height=".9" fill="#c9a646"/><rect x="3.9" y="5.3" width=".9" height=".8" fill="#fff"/></svg>
<span id="l10" class="t lr" style="left:14.00px;top:134.72px;letter-spacing:0.067px">Дата изготовления модуля:</span>
<span id="v10" class="t lr" style="left:293.30px;top:134.72px;letter-spacing:0.126px">Год: 2025, Неделя: 23</span>
<svg style="left:2px;top:145px" width="13" height="13" viewBox="-0.80 -1.34 13 13"><rect x="0" y="0" width="9" height="6" fill="#3a9a6a"/><rect x="0" y="0" width="9" height=".6" fill="#5ab488"/><g fill="#2d4638"><rect x=".8" y="1" width="1.5" height="3.4"/><rect x="2.9" y="1" width="1.5" height="3.4"/><rect x="5" y="1" width="1.5" height="3.4"/><rect x="7.1" y="1" width="1.5" height="3.4"/></g><rect x=".8" y="4.9" width="2.6" height=".9" fill="#c9a646"/><rect x="5.3" y="4.9" width="3" height=".9" fill="#c9a646"/><rect x="3.9" y="5.3" width=".9" height=".8" fill="#fff"/></svg>
<span id="l11" class="t lr" style="left:14.00px;top:146.44px;letter-spacing:0.063px">Место изготовления модуля:</span>
<span id="v11" class="t lr" style="left:293.30px;top:146.44px">4</span>
<svg style="left:2px;top:157px" width="13" height="13" viewBox="-0.80 -1.05 13 13"><rect x="0" y="0" width="9" height="6" fill="#3a9a6a"/><rect x="0" y="0" width="9" height=".6" fill="#5ab488"/><g fill="#2d4638"><rect x=".8" y="1" width="1.5" height="3.4"/><rect x="2.9" y="1" width="1.5" height="3.4"/><rect x="5" y="1" width="1.5" height="3.4"/><rect x="7.1" y="1" width="1.5" height="3.4"/></g><rect x=".8" y="4.9" width="2.6" height=".9" fill="#c9a646"/><rect x="5.3" y="4.9" width="3" height=".9" fill="#c9a646"/><rect x="3.9" y="5.3" width=".9" height=".8" fill="#fff"/></svg>
<span id="l12" class="t lr" style="left:14.00px;top:158.15px;letter-spacing:-0.179px">Производитель SDRAM:</span>
<span id="v12" class="t lr" style="left:293.30px;top:158.15px;letter-spacing:-0.148px">Неизвестный</span>
<svg style="left:2px;top:168px" width="13" height="13" viewBox="-0.80 -1.77 13 13"><rect x="0" y="0" width="9" height="6" fill="#3a9a6a"/><rect x="0" y="0" width="9" height=".6" fill="#5ab488"/><g fill="#2d4638"><rect x=".8" y="1" width="1.5" height="3.4"/><rect x="2.9" y="1" width="1.5" height="3.4"/><rect x="5" y="1" width="1.5" height="3.4"/><rect x="7.1" y="1" width="1.5" height="3.4"/></g><rect x=".8" y="4.9" width="2.6" height=".9" fill="#c9a646"/><rect x="5.3" y="4.9" width="3" height=".9" fill="#c9a646"/><rect x="3.9" y="5.3" width=".9" height=".8" fill="#fff"/></svg>
<span id="l13" class="t lr" style="left:14.00px;top:169.87px;letter-spacing:0.059px">Проверка/коррекция ошибок:</span>
<span id="v13" class="t lr" style="left:293.30px;top:169.87px;letter-spacing:-0.269px">Нет</span>
<svg style="left:4px;top:192px" width="13" height="13" viewBox="-0.50 -1.85 13 13"><rect x="0" y="0" width="5.8" height="5.2" fill="url(#fg)"/></svg>
<span id="l15" class="t lr b u" style="left:14.00px;top:193.30px;letter-spacing:0.128px">Характеристики модуля</span>
<svg style="left:2px;top:203px" width="13" height="13" viewBox="-0.80 -1.92 13 13"><rect x="0" y="0" width="9" height="6" fill="#3a9a6a"/><rect x="0" y="0" width="9" height=".6" fill="#5ab488"/><g fill="#2d4638"><rect x=".8" y="1" width="1.5" height="3.4"/><rect x="2.9" y="1" width="1.5" height="3.4"/><rect x="5" y="1" width="1.5" height="3.4"/><rect x="7.1" y="1" width="1.5" height="3.4"/></g><rect x=".8" y="4.9" width="2.6" height=".9" fill="#c9a646"/><rect x="5.3" y="4.9" width="3" height=".9" fill="#c9a646"/><rect x="3.9" y="5.3" width=".9" height=".8" fill="#fff"/></svg>
<span id="l16" class="t lr" style="left:14.00px;top:205.02px;letter-spacing:-0.006px">Биты адреса строки:</span>
<span id="v16" class="t lr" style="left:293.30px;top:205.02px">16</span>
<svg style="left:2px;top:215px" width="13" height="13" viewBox="-0.80 -1.64 13 13"><rect x="0" y="0" width="9" height="6" fill="#3a9a6a"/><rect x="0" y="0" width="9" height=".6" fill="#5ab488"/><g fill="#2d4638"><rect x=".8" y="1" width="1.5" height="3.4"/><rect x="2.9" y="1" width="1.5" height="3.4"/><rect x="5" y="1" width="1.5" height="3.4"/><rect x="7.1" y="1" width="1.5" height="3.4"/></g><rect x=".8" y="4.9" width="2.6" height=".9" fill="#c9a646"/><rect x="5.3" y="4.9" width="3" height=".9" fill="#c9a646"/><rect x="3.9" y="5.3" width=".9" height=".8" fill="#fff"/></svg>
<span id="l17" class="t lr" style="left:14.00px;top:216.74px;letter-spacing:-0.090px">Биты адреса столбца:</span>
<span id="v17" class="t lr" style="left:293.30px;top:216.74px">10</span>
<svg style="left:2px;top:227px" width="13" height="13" viewBox="-0.80 -1.36 13 13"><rect x="0" y="0" width="9" height="6" fill="#3a9a6a"/><rect x="0" y="0" width="9" height=".6" fill="#5ab488"/><g fill="#2d4638"><rect x=".8" y="1" width="1.5" height="3.4"/><rect x="2.9" y="1" width="1.5" height="3.4"/><rect x="5" y="1" width="1.5" height="3.4"/><rect x="7.1" y="1" width="1.5" height="3.4"/></g><rect x=".8" y="4.9" width="2.6" height=".9" fill="#c9a646"/><rect x="5.3" y="4.9" width="3" height=".9" fill="#c9a646"/><rect x="3.9" y="5.3" width=".9" height=".8" fill="#fff"/></svg>
<span id="l18" class="t lr" style="left:14.00px;top:228.46px;letter-spacing:0.021px">Плотность модуля:</span>
<span id="v18" class="t lr" style="left:293.30px;top:228.46px;letter-spacing:-0.127px">8192 Mb</span>
<svg style="left:2px;top:239px" width="13" height="13" viewBox="-0.80 -1.07 13 13"><rect x="0" y="0" width="9" height="6" fill="#3a9a6a"/><rect x="0" y="0" width="9" height=".6" fill="#5ab488"/><g fill="#2d4638"><rect x=".8" y="1" width="1.5" height="3.4"/><rect x="2.9" y="1" width="1.5" height="3.4"/><rect x="5" y="1" width="1.5" height="3.4"/><rect x="7.1" y="1" width="1.5" height="3.4"/></g><rect x=".8" y="4.9" width="2.6" height=".9" fill="#c9a646"/><rect x="5.3" y="4.9" width="3" height=".9" fill="#c9a646"/><rect x="3.9" y="5.3" width=".9" height=".8" fill="#fff"/></svg>
<span id="l19" class="t lr" style="left:14.00px;top:240.17px;letter-spacing:0.071px">Количество рангов:</span>
<span id="v19" class="t lr" style="left:293.30px;top:240.17px">2</span>
<svg style="left:2px;top:250px" width="13" height="13" viewBox="-0.80 -1.79 13 13"><rect x="0" y="0" width="9" height="6" fill="#3a9a6a"/><rect x="0" y="0" width="9" height=".6" fill="#5ab488"/><g fill="#2d4638"><rect x=".8" y="1" width="1.5" height="3.4"/><rect x="2.9" y="1" width="1.5" height="3.4"/><rect x="5" y="1" width="1.5" height="3.4"/><rect x="7.1" y="1" width="1.5" height="3.4"/></g><rect x=".8" y="4.9" width="2.6" height=".9" fill="#c9a646"/><rect x="5.3" y="4.9" width="3" height=".9" fill="#c9a646"/><rect x="3.9" y="5.3" width=".9" height=".8" fill="#fff"/></svg>
<span id="l20" class="t lr" style="left:14.00px;top:251.89px;letter-spacing:0.100px">Количество групп банков:</span>
<span id="v20" class="t lr" style="left:293.30px;top:251.89px">4</span>
<svg style="left:2px;top:262px" width="13" height="13" viewBox="-0.80 -1.51 13 13"><rect x="0" y="0" width="9" height="6" fill="#3a9a6a"/><rect x="0" y="0" width="9" height=".6" fill="#5ab488"/><g fill="#2d4638"><rect x=".8" y="1" width="1.5" height="3.4"/><rect x="2.9" y="1" width="1.5" height="3.4"/><rect x="5" y="1" width="1.5" height="3.4"/><rect x="7.1" y="1" width="1.5" height="3.4"/></g><rect x=".8" y="4.9" width="2.6" height=".9" fill="#c9a646"/><rect x="5.3" y="4.9" width="3" height=".9" fill="#c9a646"/><rect x="3.9" y="5.3" width=".9" height=".8" fill="#fff"/></svg>
<span id="l21" class="t lr" style="left:14.00px;top:263.61px;letter-spacing:-0.061px">Ширина устройства:</span>
<span id="v21" class="t lr" style="left:293.30px;top:263.61px;letter-spacing:0.109px">8 bits</span>
<svg style="left:2px;top:274px" width="13" height="13" viewBox="-0.80 -1.22 13 13"><rect x="0" y="0" width="9" height="6" fill="#3a9a6a"/><rect x="0" y="0" width="9" height=".6" fill="#5ab488"/><g fill="#2d4638"><rect x=".8" y="1" width="1.5" height="3.4"/><rect x="2.9" y="1" width="1.5" height="3.4"/><rect x="5" y="1" width="1.5" height="3.4"/><rect x="7.1" y="1" width="1.5" height="3.4"/></g><rect x=".8" y="4.9" width="2.6" height=".9" fill="#c9a646"/><rect x="5.3" y="4.9" width="3" height=".9" fill="#c9a646"/><rect x="3.9" y="5.3" width=".9" height=".8" fill="#fff"/></svg>
<span id="l22" class="t lr" style="left:14.00px;top:275.32px;letter-spacing:-0.163px">Ширина шины:</span>
<span id="v22" class="t lr" style="left:293.30px;top:275.32px;letter-spacing:0.104px">64 bits</span>
<svg style="left:2px;top:285px" width="13" height="13" viewBox="-0.80 -1.94 13 13"><rect x="0" y="0" width="9" height="6" fill="#3a9a6a"/><rect x="0" y="0" width="9" height=".6" fill="#5ab488"/><g fill="#2d4638"><rect x=".8" y="1" width="1.5" height="3.4"/><rect x="2.9" y="1" width="1.5" height="3.4"/><rect x="5" y="1" width="1.5" height="3.4"/><rect x="7.1" y="1" width="1.5" height="3.4"/></g><rect x=".8" y="4.9" width="2.6" height=".9" fill="#c9a646"/><rect x="5.3" y="4.9" width="3" height=".9" fill="#c9a646"/><rect x="3.9" y="5.3" width=".9" height=".8" fill="#fff"/></svg>
<span id="l23" class="t lr" style="left:14.00px;top:287.04px;letter-spacing:-0.043px">Die Count:</span>
<span id="v23" class="t lr" style="left:293.30px;top:287.04px">1</span>
<svg style="left:3px;top:295px" width="13" height="13" viewBox="-0.20 -1.66 13 13"><path d="M6 -.4L7.5 -.4L5.2 3.7L6.6 3.7L2.2 9.3L1.5 9L3.8 5.1L2.5 5.1Z" fill="#f5b400" stroke="#eda000" stroke-width=".25"/></svg>
<span id="l24" class="t lr" style="left:14.00px;top:298.76px;letter-spacing:0.035px">Номинальное напряжение модуля (VDD):</span>
<span id="v24" class="t lr" style="left:293.30px;top:298.76px;letter-spacing:0.041px">1.2 V</span>
<span id="l25" class="t lr" style="left:14.00px;top:310.48px;letter-spacing:-0.116px">Минимальное время цикла SDRAM (tCKAVGmin):</span>
<span id="v25" class="t lr" style="left:293.30px;top:310.48px;letter-spacing:0.027px">0.62500 ns (1600 MHz)</span>
<span id="l26" class="t lr" style="left:14.00px;top:322.19px;letter-spacing:-0.115px">Максимальное время цикла SDRAM (tCKAVGmax):</span>
<span id="v26" class="t lr" style="left:293.30px;top:322.19px;letter-spacing:0.067px">1.60000 ns</span>
<span id="l27" class="t lr" style="left:14.00px;top:333.91px;letter-spacing:0.020px">Поддерживаемые задержки CAS#:</span>
<span id="v27" class="t lr" style="left:293.30px;top:333.91px;letter-spacing:0.222px">10, 11, 12, 13, 14, 15, 16, 17, 18, 19, 20, 21, 22, 24</span>
<span id="l28" class="t lr" style="left:14.00px;top:345.63px;letter-spacing:0.027px">Минимальное время задержки CAS# (tAAmin):</span>
<span id="v28" class="t lr" style="left:293.30px;top:345.63px;letter-spacing:0.068px">13.750 ns</span>
<span id="l29" class="t lr" style="left:14.00px;top:357.34px;letter-spacing:-0.043px">Минимальная задержка RAS# to CAS# (tRCDmin):</span>
<span id="v29" class="t lr" style="left:293.30px;top:357.34px;letter-spacing:0.068px">13.750 ns</span>
<span id="l30" class="t lr" style="left:14.00px;top:369.06px;letter-spacing:-0.045px">Minimum Row Precharge Time (tRPmin):</span>
<span id="v30" class="t lr" style="left:293.30px;top:369.06px;letter-spacing:0.068px">13.750 ns</span>
</div>
<div style="left:865.8px;top:68px;width:11.2px;height:377.6px;background:#f0f0f0"></div>
<div style="left:870.6px;top:77.4px;width:1.5px;height:194.4px;border-radius:.7px;background:#7c7c7c"></div>
<div style="left:0;top:447px;width:877px;height:1px;background:#dcdcdc"></div>
<span id="sb0" class="t" style="left:1.70px;top:449.70px;letter-spacing:0.004px;font-size:7.3px;color:#000;-webkit-text-stroke:.04px;white-space:pre">NINKEAR -&gt; Память -&gt; Слот: 0 [P0 CHANNEL A/DIMM 0] - </span>
<span id="sb1" class="t" style="left:198.40px;top:449.70px;letter-spacing:-0.394px;font-size:7.3px;color:#000;-webkit-text-stroke:.04px;white-space:pre">16 GB PC4-25600 DDR4 SDRAM </span>
<span id="sb2" class="t" style="left:300.10px;top:449.70px;letter-spacing:0.063px;font-size:7.3px;color:#000;-webkit-text-stroke:.04px;white-space:pre">Hong Kong Hyunion Electronics </span>
<span id="sb3" class="t" style="left:407.00px;top:449.70px;letter-spacing:-0.179px;font-size:7.3px;color:#000;-webkit-text-stroke:.04px;white-space:pre">faspeed N4-16G-PAD</span>
<svg style="left:868px;top:450px" width="9" height="9" viewBox="0 0 9 9"><g fill="#b8b8b8"><rect x="6.6" y="1.6" width="1.2" height="1.2"/><rect x="4.2" y="4" width="1.2" height="1.2"/><rect x="6.6" y="4" width="1.2" height="1.2"/><rect x="1.8" y="6.4" width="1.2" height="1.2"/><rect x="4.2" y="6.4" width="1.2" height="1.2"/><rect x="6.6" y="6.4" width="1.2" height="1.2"/></g></svg>
<svg style="left:873px;top:455px" width="4" height="4" viewBox="0 0 4 4"><path d="M4 1.2V4H1.2A2.8 2.8 0 0 0 4 1.2Z" fill="#1c2c50"/></svg>
</body></html>
